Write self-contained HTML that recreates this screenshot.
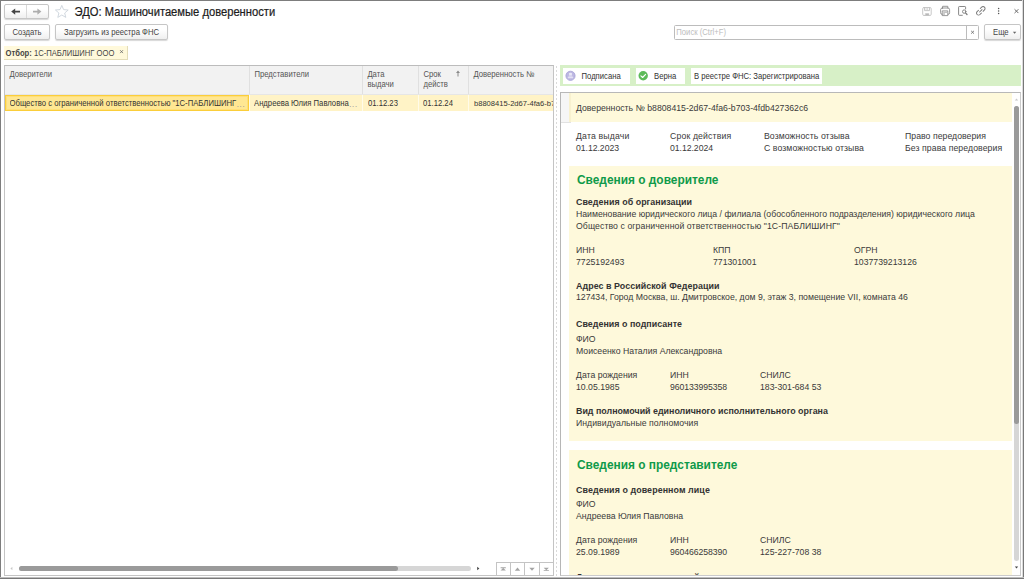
<!DOCTYPE html>
<html lang="ru">
<head>
<meta charset="utf-8">
<title>ЭДО: Машиночитаемые доверенности</title>
<style>
html,body{margin:0;padding:0;}
body{width:1024px;height:579px;overflow:hidden;background:#fff;font-family:"Liberation Sans",Arial,sans-serif;color:#333;position:relative;}
.abs{position:absolute;}
.btn span{display:inline-block;transform:scaleY(1.07);}
.btn{position:absolute;box-sizing:border-box;border:1px solid #c6c6c6;border-radius:2px;background:linear-gradient(#ffffff 30%,#efefef);box-shadow:0 1px 1px rgba(0,0,0,.16);font-size:7.7px;line-height:14px;text-align:center;color:#444;white-space:nowrap;}
#title{left:74.6px;top:4.8px;font-size:11.2px;line-height:15px;color:#1c1c1c;white-space:nowrap;transform:scaleY(1.06);transform-origin:0 11.4px;-webkit-text-stroke:0.2px #1c1c1c;}
#tag{left:4px;top:46px;width:124px;height:14px;box-sizing:border-box;background:#fff9db;border-right:1px solid #e3dcb8;border-bottom:1px solid #e3dcb8;font-size:7.65px;line-height:16.5px;overflow:hidden;white-space:nowrap;color:#444;}
/* table */
#tbl{left:4px;top:65px;width:550px;height:511px;box-sizing:border-box;border:1px solid #c4c4c4;border-top-color:#bcbcbc;background:#fff;overflow:hidden;}
#thead{left:0;top:0;width:548px;height:28px;background:#f2f2f2;border-bottom:1px solid #e6e6e6;}
.sy{display:inline-block;transform:scaleY(1.08);transform-origin:0 7.5px;}
.sy3{display:inline-block;position:relative;top:0.9px;transform:scaleY(1.08);transform-origin:0 9.6px;}
.sy2{display:inline-block;transform:scaleY(1.07);transform-origin:0 10.8px;}
.th{position:absolute;top:0;height:28px;box-sizing:border-box;border-left:1px solid #e0e0e0;font-size:7.7px;line-height:8.9px;padding:5.3px 0 0 4.4px;color:#555;white-space:nowrap;}
#row{left:0;top:29px;width:548px;height:16px;background:#fff3c6;}
.td{position:absolute;top:30.2px;height:15px;font-size:7.7px;line-height:16px;white-space:nowrap;color:#333;overflow:hidden;}
.rs{position:absolute;top:29px;width:1px;height:16px;background:#fffbe9;}
#sel{left:0px;top:29px;width:244px;height:16px;box-sizing:border-box;background:#ffe792;border:1px solid #fbce3a;box-shadow:inset 0 0 0 1px #ffdf78;}
.el{color:#9a9a9a;letter-spacing:0.7px;position:relative;top:0.8px;margin-left:0.5px;}
/* right */
#gbar{left:560px;top:65px;width:461px;height:21px;background:#d7f0c7;}
.badge{position:absolute;top:3px;height:15.5px;background:#fff;font-size:7.7px;line-height:16.9px;overflow:hidden;color:#333;white-space:nowrap;box-sizing:border-box;}
#doc{left:560px;top:92px;width:461px;height:484px;box-sizing:border-box;border:1px solid #cbcbcb;border-left-color:#b6b6b6;border-top-color:#b8b8b8;background:#fff;overflow:hidden;}
.y{position:absolute;background:#fef9db;}
.t{position:absolute;font-size:8.7px;line-height:11px;white-space:nowrap;color:#3a3a3a;}
.b{font-weight:bold;color:#333;font-size:8.9px;}
.h{position:absolute;font-size:11.9px;line-height:14px;font-weight:bold;color:#109a4a;white-space:nowrap;}
.ic{position:absolute;}
</style>
</head>
<body>
<!-- header -->
<div class="btn" style="left:4px;top:4px;width:45px;height:15px;"></div>
<div class="abs" style="left:26px;top:5px;width:1px;height:13px;background:#d9d9d9;"></div>
<svg class="abs" style="left:4px;top:4px" width="44" height="15" viewBox="0 0 44 15">
 <path d="M7.2 7.6 L11.2 4.5 L11.2 6.8 L16 6.8 L16 8.4 L11.2 8.4 L11.2 10.7 Z" fill="#444"/>
 <path d="M37.4 7.6 L33.4 4.5 L33.4 6.8 L29 6.8 L29 8.4 L33.4 8.4 L33.4 10.7 Z" fill="#adadad"/>
</svg>
<svg class="abs" style="left:54px;top:4px" width="16" height="15" viewBox="0 0 16 15">
 <path d="M7.8 1.4 L9.6 5.6 L14.2 6 L10.7 9 L11.8 13.4 L7.8 11 L3.8 13.4 L4.9 9 L1.4 6 L6 5.6 Z" fill="#fff" stroke="#c9d1d9" stroke-width="0.85" stroke-linejoin="miter"/>
</svg>
<div id="title" class="abs">ЭДО: Машиночитаемые доверенности</div>

<!-- top-right icons -->
<svg class="ic" style="left:920px;top:4px" width="104" height="16" viewBox="920 4 104 16" fill="none" stroke-linecap="round" stroke-linejoin="round">
 <!-- save (disabled) -->
 <g stroke="#c2c2c2" stroke-width="0.9">
  <rect x="922.7" y="7.5" width="8.5" height="8" rx="1.3"/>
  <path d="M924.5 7.6 v3 h5 v-3"/>
  <path d="M926.1 8.2 v1.6 M927.7 8.2 v1.6" stroke="#d0d0d0"/>
  <path d="M925.6 13.6 h3.2 v1.4 h-3.2 z" fill="#b9b9b9" stroke="#b9b9b9" stroke-width="0.5"/>
 </g>
 <!-- printer -->
 <g stroke="#808080" stroke-width="0.8">
  <path d="M942.6 8 v-1.7 h5.2 v1.7"/>
  <rect x="940.6" y="8" width="9" height="6.4" rx="1.7"/>
  <path d="M942.6 10.9 h5.2 v4.7 h-5.2 z" fill="#fff"/>
  <path d="M943.2 11.5 h3.8 v1.4 h-2.2 v2.2 h-1.6 z" fill="#c4c4c4" stroke="none"/>
 </g>
 <!-- preview -->
 <g stroke="#7a7a7a" stroke-width="0.9">
  <path d="M965.6 9 v-1.8 a0.7 0.7 0 0 0 -.7 -.7 h-5.6 a0.7 0.7 0 0 0 -.7 .7 v7.4 a0.7 0.7 0 0 0 .7 .7 h3"/>
  <circle cx="964.2" cy="11.6" r="1.7"/>
  <path d="M965.5 12.9 l1.5 1.6" stroke-width="1.3"/>
 </g>
 <!-- link -->
 <g stroke="#767676" stroke-width="0.95" transform="translate(980.8 10.8) rotate(-45)">
  <path d="M1.2 -2 H3.2 A2 2 0 0 1 3.2 2 H1.2"/>
  <path d="M-1.2 2 H-3.2 A2 2 0 0 1 -3.2 -2 H-1.2"/>
  <path d="M-1.7 0 H1.7"/>
 </g>
 <!-- dots -->
 <g fill="#555" stroke="none">
  <circle cx="998.6" cy="8.6" r="0.75"/><circle cx="998.6" cy="11" r="0.75"/><circle cx="998.6" cy="13.4" r="0.75"/>
 </g>
 <!-- close -->
 <path d="M1014.8 9.5 l3.3 3.3 M1018.1 9.5 l-3.3 3.3" stroke="#6a6a6a" stroke-width="1"/>
</svg>

<div class="btn" style="left:4px;top:24px;width:46px;height:16px;line-height:16px;"><span>Создать</span></div>
<div class="btn" style="left:55px;top:24px;width:113px;height:16px;line-height:16px;"><span>Загрузить из реестра ФНС</span></div>

<div id="tag" class="abs"><span style="display:inline-block;transform:scaleY(1.09);transform-origin:0 11px;"><b style="margin-left:1.5px">Отбор:</b> 1С-ПАБЛИШИНГ ООО</span></div>
<svg class="abs" style="left:119px;top:49px" width="6" height="6" viewBox="0 0 6 6"><path d="M1.1 1.2 L4 4.1 M4 1.2 L1.1 4.1" stroke="#666" stroke-width="0.8"/></svg>

<!-- search -->
<div class="abs" style="left:674px;top:25px;width:305px;height:15px;box-sizing:border-box;border:1px solid #bcbcbc;border-radius:1.5px;background:#fff;font-size:7.7px;line-height:13px;color:#bdbdbd;padding-left:1.3px;"><span style="display:inline-block;transform:scaleY(1.08);">Поиск (Ctrl+F)</span></div>
<div class="abs" style="left:966px;top:26px;width:1px;height:13px;background:#bcbcbc;"></div>
<svg class="abs" style="left:969px;top:29px" width="8" height="8" viewBox="0 0 8 8"><path d="M2.1 1.8 L5 4.7 M5 1.8 L2.1 4.7" stroke="#666" stroke-width="0.8"/></svg>
<div class="btn" style="left:984px;top:24px;width:37px;height:16px;line-height:16px;text-align:left;padding-left:8px;"><span>Еще</span></div>
<svg class="abs" style="left:1012px;top:31px" width="6" height="4" viewBox="0 0 6 4"><path d="M0.9 0.8 L4.3 0.8 L2.6 2.7 Z" fill="#666"/></svg>

<!-- table -->
<div id="tbl" class="abs">
 <div id="thead" class="abs"></div>
 <div class="th" style="left:0;border-left:none;"><span class="sy">Доверители</span></div>
 <div class="th" style="left:244px;"><span class="sy">Представители</span></div>
 <div class="th" style="left:357px;"><span class="sy">Дата<br>выдачи</span></div>
 <div class="th" style="left:413px;"><span class="sy">Срок<br>действ</span></div>
 <div class="th" style="left:463px;"><span class="sy">Доверенность №</span></div>
 <svg class="abs" style="left:450px;top:4.4px" width="6" height="8" viewBox="0 0 6 8"><path d="M3 0.6 L5 3 L3.5 3 L3.5 6.6 L2.5 6.6 L2.5 3 L1 3 Z" fill="#8a8a8a"/></svg>
 <div id="row" class="abs"></div>
 <div class="rs" style="left:244px"></div><div class="rs" style="left:357px"></div><div class="rs" style="left:413px"></div><div class="rs" style="left:463px"></div>
 <div id="sel" class="abs"></div>
 <div class="td" style="left:4.5px;"><span class="sy2">Общество с ограниченной ответственностью "1С-ПАБЛИШИНГ<span class="el">...</span></span></div>
 <div class="td" style="left:249px;"><span class="sy2">Андреева Юлия Павловна<span class="el">...</span></span></div>
 <div class="td" style="left:363px;"><span class="sy2">01.12.23</span></div>
 <div class="td" style="left:418px;"><span class="sy2">01.12.24</span></div>
 <div class="td" style="left:469px;font-size:7.57px;"><span class="sy2">b8808415-2d67-4fa6-b703-4fdb427362c6</span></div>
 <!-- h scrollbar -->
 <svg class="abs" style="left:3px;top:499px" width="8" height="8" viewBox="0 0 8 8"><path d="M4.4 1.8 L2.4 3.5 L4.4 5.2 Z" fill="#c8c8c8"/></svg>
 <div class="abs" style="left:13.5px;top:500px;width:452px;height:5px;border-radius:2.5px;background:#d6d6d6;"></div>
 <div class="abs" style="left:13.5px;top:500px;width:379px;height:5px;border-radius:2.5px;background:#9a9a9a;"></div>
 <svg class="abs" style="left:469px;top:499px" width="8" height="8" viewBox="0 0 8 8"><path d="M3.2 1.8 L5.4 3.5 L3.2 5.2 Z" fill="#444"/></svg>
 <!-- nav buttons -->
 <div class="abs" style="left:491px;top:496px;width:58px;height:14px;box-sizing:border-box;border-left:1px solid #c4c4c4;border-top:1px solid #c4c4c4;background:#fff;"></div>
 <div class="abs" style="left:505px;top:497px;width:1px;height:13px;background:#c4c4c4;"></div>
 <div class="abs" style="left:519px;top:497px;width:1px;height:13px;background:#c4c4c4;"></div>
 <div class="abs" style="left:534px;top:497px;width:1px;height:13px;background:#c4c4c4;"></div>
 <svg class="abs" style="left:491px;top:496px" width="58" height="14" viewBox="0 0 58 14" fill="#a4a4a4">
  <path d="M4.6 5.3 h5.2 v0.9 h-5.2 z M7.2 6.1 L9.9 8.6 L4.5 8.6 Z"/>
  <path d="M21.5 5.6 L24.2 8.7 L18.8 8.7 Z"/>
  <path d="M33.3 5.7 L38.7 5.7 L36 8.7 Z"/>
  <path d="M47.7 5.7 L52.9 5.7 L50.3 8.3 Z M47.7 8.2 h5.2 v0.9 h-5.2 z"/>
 </svg>
</div>

<!-- splitter -->
<div class="abs" style="left:556px;top:66px;width:1px;height:510px;background:repeating-linear-gradient(#dadada 0 2px,#fff 2px 4px);"></div>

<!-- right panel -->
<div id="gbar" class="abs">
 <div class="badge" style="left:2.5px;width:67px;padding-left:19px;"><span class="sy3">Подписана</span></div>
 <div class="badge" style="left:75.5px;width:49.5px;padding-left:18.6px;"><span class="sy3">Верна</span></div>
 <div class="badge" style="left:131px;width:131px;padding-left:3px;"><span class="sy3">В реестре ФНС: Зарегистрирована</span></div>
 <svg class="abs" style="left:4px;top:4px" width="14" height="14" viewBox="0 0 14 14">
  <circle cx="6.5" cy="6.8" r="4.6" fill="#bcb7e2" stroke="#a59fd6" stroke-width="0.8"/>
  <ellipse cx="6.5" cy="5" rx="1.7" ry="1.3" fill="#e9e7f6"/>
  <path d="M5.2 6.2 h2.6 l1.7 3 h-6 z" fill="#e3e0f3"/>
  <path d="M4.2 7.3 h4.6" stroke="#c3bfe5" stroke-width="0.5"/>
 </svg>
 <svg class="abs" style="left:77px;top:4px" width="14" height="14" viewBox="0 0 14 14">
  <circle cx="6.2" cy="6.8" r="4.7" fill="#5dbb59"/>
  <path d="M3.9 6.9 L5.6 8.5 L8.6 5.3" stroke="#fff" stroke-width="1.1" fill="none" stroke-linecap="round" stroke-linejoin="round"/>
 </svg>
</div>

<div id="doc" class="abs">
 <div class="abs" style="left:0;top:0;width:10px;height:29px;background:#f6f6f6;border-bottom:1px solid #e2e2e2;"></div>
 <div class="y" style="left:8px;top:0px;width:443px;height:29px;"></div>
 <div class="abs" style="left:8px;top:0;width:2px;height:29px;background:#f8f1cf;"></div>
 <div class="y" style="left:8px;top:73px;width:443px;height:275px;"></div>
 <div class="y" style="left:8px;top:357px;width:443px;height:140px;"></div>
 <div class="t" style="left:15px;top:9.6px;">Доверенность № b8808415-2d67-4fa6-b703-4fdb427362c6</div>
 <div class="t" style="left:15px;top:38.2px;letter-spacing:0.18px;">Дата выдачи</div>
 <div class="t" style="left:109px;top:38.2px;letter-spacing:0.15px;">Срок действия</div>
 <div class="t" style="left:203px;top:38.2px;letter-spacing:0.08px;">Возможность отзыва</div>
 <div class="t" style="left:344px;top:38.2px;letter-spacing:0.04px;">Право передоверия</div>
 <div class="t" style="left:15px;top:50.2px;letter-spacing:-0.05px;">01.12.2023</div>
 <div class="t" style="left:109px;top:50.2px;letter-spacing:-0.05px;">01.12.2024</div>
 <div class="t" style="left:203px;top:50.2px;letter-spacing:0.09px;">С возможностью отзыва</div>
 <div class="t" style="left:344px;top:50.2px;letter-spacing:0.08px;">Без права передоверия</div>
 <div class="t b" style="left:15px;top:103.9px;letter-spacing:0.05px;">Сведения об организации</div>
 <div class="t" style="left:15px;top:115.9px;">Наименование юридического лица / филиала (обособленного подразделения) юридического лица</div>
 <div class="t" style="left:15px;top:127.9px;letter-spacing:0.085px;">Общество с ограниченной ответственностью &quot;1С-ПАБЛИШИНГ&quot;</div>
 <div class="t" style="left:15px;top:151.7px;">ИНН</div>
 <div class="t" style="left:152px;top:151.7px;">КПП</div>
 <div class="t" style="left:293px;top:151.7px;">ОГРН</div>
 <div class="t" style="left:15px;top:163.7px;">7725192493</div>
 <div class="t" style="left:152px;top:163.7px;">771301001</div>
 <div class="t" style="left:293px;top:163.7px;">1037739213126</div>
 <div class="t b" style="left:15px;top:187.7px;letter-spacing:0.06px;">Адрес в Российской Федерации</div>
 <div class="t" style="left:15px;top:199.2px;">127434, Город Москва, ш. Дмитровское, дом 9, этаж 3, помещение VII, комната 46</div>
 <div class="t b" style="left:15px;top:226.2px;letter-spacing:0.03px;">Сведения о подписанте</div>
 <div class="t" style="left:15px;top:241.2px;">ФИО</div>
 <div class="t" style="left:15px;top:253.2px;">Моисеенко Наталия Александровна</div>
 <div class="t" style="left:15px;top:277.2px;">Дата рождения</div>
 <div class="t" style="left:109px;top:277.2px;">ИНН</div>
 <div class="t" style="left:199px;top:277.2px;">СНИЛС</div>
 <div class="t" style="left:15px;top:289.2px;">10.05.1985</div>
 <div class="t" style="left:109px;top:289.2px;letter-spacing:-0.08px;">960133995358</div>
 <div class="t" style="left:199px;top:289.2px;">183-301-684 53</div>
 <div class="t b" style="left:15px;top:313px;">Вид полномочий единоличного исполнительного органа</div>
 <div class="t" style="left:15px;top:324.6px;letter-spacing:0.04px;">Индивидуальные полномочия</div>
 <div class="t b" style="left:15px;top:391.9px;letter-spacing:0.08px;">Сведения о доверенном лице</div>
 <div class="t" style="left:15px;top:406.2px;">ФИО</div>
 <div class="t" style="left:15px;top:418.2px;">Андреева Юлия Павловна</div>
 <div class="t" style="left:15px;top:442.2px;">Дата рождения</div>
 <div class="t" style="left:109px;top:442.2px;">ИНН</div>
 <div class="t" style="left:199px;top:442.2px;">СНИЛС</div>
 <div class="t" style="left:15px;top:454.2px;">25.09.1989</div>
 <div class="t" style="left:109px;top:454.2px;letter-spacing:-0.08px;">960466258390</div>
 <div class="t" style="left:199px;top:454.2px;">125-227-708 38</div>
 <div class="t b" style="left:15px;top:479px;">Документ, удостоверяющий личность</div>
 <div class="h" style="left:16px;top:80.2px;">Сведения о доверителе</div>
 <div class="h" style="left:16px;top:364.6px;">Сведения о представителе</div>
 <!-- v scrollbar -->
 <div class="abs" style="left:451px;top:0;width:9px;height:482px;background:#fff;"></div>
 <svg class="abs" style="left:452px;top:3px" width="8" height="8" viewBox="0 0 8 8"><path d="M1.8 4.6 L3.5 2.6 L5.2 4.6 Z" fill="#c8c8c8"/></svg>
 <div class="abs" style="left:453px;top:13px;width:5px;height:455px;border-radius:2.5px;background:#d6d6d6;"></div>
 <div class="abs" style="left:453px;top:13px;width:5px;height:318px;border-radius:2.5px;background:#9a9a9a;"></div>
 <svg class="abs" style="left:452px;top:471px" width="8" height="8" viewBox="0 0 8 8"><path d="M1.8 2.6 L5.2 2.6 L3.5 4.6 Z" fill="#444"/></svg>
</div>

<!-- window frame -->
<div class="abs" style="left:0;top:0;width:1024px;height:1px;background:#7d7d7d;"></div>
<div class="abs" style="left:0;top:0;width:1px;height:579px;background:#7d7d7d;"></div>
<div class="abs" style="left:1022px;top:0;width:1px;height:579px;background:#dcdcdc;"></div>
<div class="abs" style="left:1023px;top:0;width:1px;height:579px;background:#787878;"></div>
<div class="abs" style="left:0;top:577px;width:1024px;height:1px;background:#bdbdbd;"></div>
<div class="abs" style="left:0;top:578px;width:1024px;height:1px;background:#787878;"></div>
</body>
</html>
